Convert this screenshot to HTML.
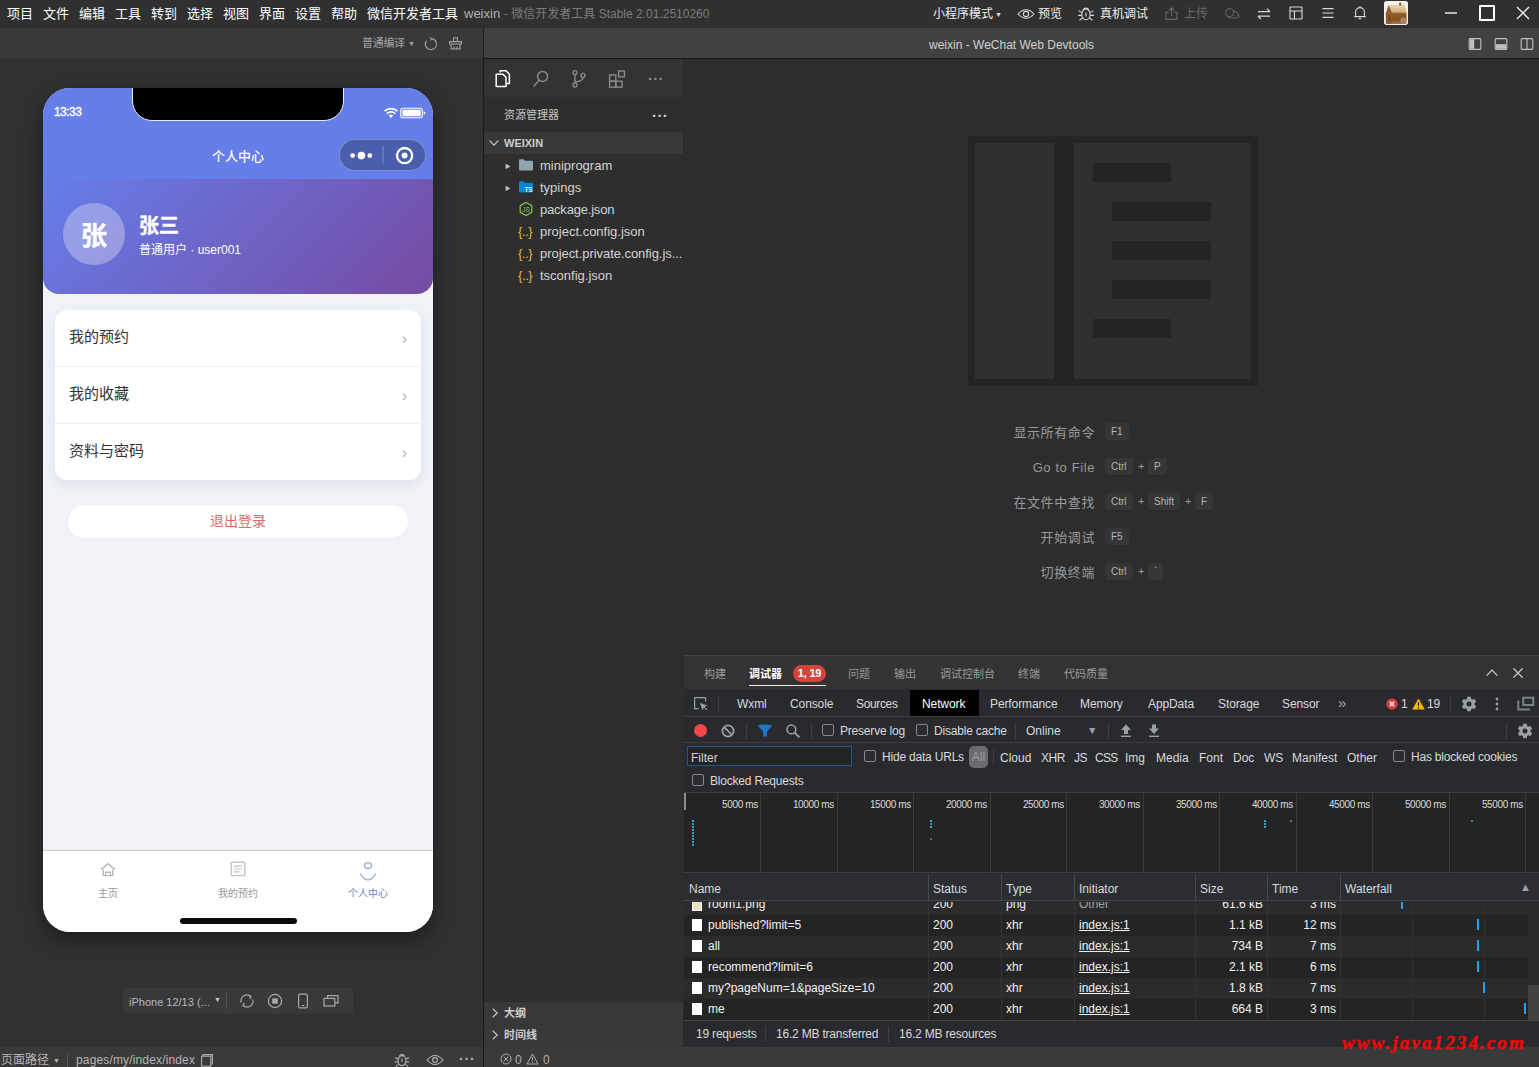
<!DOCTYPE html>
<html lang="zh-CN">
<head>
<meta charset="utf-8">
<title>weixin - 微信开发者工具</title>
<style>
*{box-sizing:border-box;margin:0;padding:0}
html,body{width:1539px;height:1067px;overflow:hidden;background:#2d2d2d}
body{font-family:"Liberation Sans","Noto Sans CJK SC",sans-serif;font-size:12px;color:#ccc;position:relative}
.abs{position:absolute}
svg{display:block;overflow:visible}
/* ---------- top menubar ---------- */
#menubar{position:absolute;left:0;top:0;width:1539px;height:28px;background:#303030}
#menubar .mi{position:absolute;top:0;height:28px;line-height:27px;font-size:13px;color:#fff;white-space:nowrap}
#menubar .dim{color:#7c7c7c}
/* ---------- second row ---------- */
#tool-left{position:absolute;left:0;top:28px;width:483px;height:30px;background:#393939}
#tool-right{position:absolute;left:484px;top:28px;width:1055px;height:31px;background:#414141;border-bottom:1px solid #161616}
#vsplit{position:absolute;left:483px;top:28px;width:1px;height:1039px;background:#1c1c1c}
/* ---------- simulator ---------- */
#sim{position:absolute;left:0;top:58px;width:483px;height:989px;background:#303133}
#phone{position:absolute;left:43px;top:30px;width:390px;height:844px;border-radius:27px;overflow:hidden;background:#f0f2f8;box-shadow:0 8px 22px rgba(0,0,0,.42)}
#statusbar{position:absolute;left:0;top:0;width:390px;height:91px;background:#667eea}
#notch{position:absolute;left:89px;top:-2px;width:212px;height:35px;background:#000;border:1px solid #e8ebff;border-radius:0 0 20px 20px}
#hdr{position:absolute;left:0;top:91px;width:390px;height:115px;background:linear-gradient(135deg,#667eea 0%,#764ba2 100%);border-radius:0 0 16px 16px}
#avatar{position:absolute;left:20px;top:24px;width:62px;height:62px;border-radius:50%;background:rgba(255,255,255,.3);color:#fff;font-weight:bold;font-size:26px;line-height:66px;text-align:center;-webkit-text-stroke:.5px #fff}
.card{position:absolute;left:12px;top:222px;width:366px;height:170px;background:#fff;border-radius:12px;box-shadow:0 4px 12px rgba(100,110,160,.12)}
.card .row{position:absolute;left:0;width:366px;height:57px;border-bottom:1px solid #f0f0f3;font-size:15px;color:#333;line-height:53px;padding-left:14px}
.card .row:last-child{border-bottom:none}
.card .row i{position:absolute;right:14px;top:2px;font-style:normal;color:#b4b4b4;font-size:16px}
#logout{position:absolute;left:25px;top:417px;width:340px;height:33px;border-radius:16px;background:#fff;color:#e26868;font-size:14px;line-height:33px;text-align:center;box-shadow:0 0 2px rgba(0,0,0,.06)}
#tabbar{position:absolute;left:0;top:762px;width:390px;height:82px;background:#fff;border-top:1px solid #c9c9cc}
#tabbar .t{position:absolute;top:36px;width:130px;text-align:center;font-size:10px;color:#999;line-height:14px}
#homeind{position:absolute;left:137px;top:830px;width:117px;height:6px;border-radius:3px;background:#0a0a0a}
/* ---------- bottom status ---------- */
#stat-left{position:absolute;left:0;top:1047px;width:483px;height:20px;background:#3a3a3a}
#stat-right{position:absolute;left:484px;top:1047px;width:1055px;height:20px;background:#3a3a3a}
/* ---------- right side ---------- */
#actbar{position:absolute;left:484px;top:59px;width:199px;height:38px;background:#333333}
#side{position:absolute;left:484px;top:97px;width:199px;height:950px;background:#2e2e2e}
#side .hd{position:absolute;left:0;top:0;width:199px;height:35px;background:#2d2d2d}
#side .sec{position:absolute;left:0;width:199px;height:22px;background:#383838;font-size:11px;font-weight:bold;color:#ccc;line-height:22px}
#side .f{position:absolute;left:56px;font-size:13px;color:#d4d4d4;line-height:24px;white-space:nowrap;letter-spacing:0}
#sidesplit{position:absolute;left:683px;top:59px;width:1px;height:988px;background:#2a2a2a}
#editor{position:absolute;left:684px;top:59px;width:855px;height:596px;background:#2d2d2d}
.kb{position:absolute;height:17px;line-height:18px;padding:0 6px;font-size:10px;color:#b4b4b4;background:#363636;border-radius:3px;box-shadow:0 1px 0 #292929}
.kl{position:absolute;right:444px;font-size:13px;color:#9a9a9a;line-height:21px;white-space:nowrap;letter-spacing:.6px}
.kp{position:absolute;font-size:11px;color:#9a9a9a;line-height:17px}
/* ---------- debugger ---------- */
#dbg{position:absolute;left:684px;top:655px;width:855px;height:392px;background:#292a2d;border-top:1px solid #434343}
#dbg .ph{position:absolute;left:0;top:0;width:855px;height:33px;background:#333333}
#dbg .pt{position:absolute;top:0;line-height:37px;font-size:11px;color:#9a9a9a;white-space:nowrap}
#dbg .dt{position:absolute;top:34px;line-height:28px;font-size:12px;color:#d8dadf;white-space:nowrap;letter-spacing:-.1px}
#dbg .tb{position:absolute;left:0;top:60px;width:855px;height:27px;border-top:1px solid #3d3e42;border-bottom:1px solid #3d3e42}
#dbg .lbl{position:absolute;font-size:12px;color:#d8dadf;white-space:nowrap;line-height:16px}
#dbg .cb{position:absolute;width:12px;height:12px;border:1px solid #85878c;border-radius:2px;background:#2b2c30}
#dbg .vs{position:absolute;width:1px;height:16px;background:#3e3f43}
#ov{position:absolute;left:0;top:136px;width:855px;height:81px;background:#242424;border-top:1px solid #3d3e42;border-bottom:1px solid #3d3e42}
#ov .g{position:absolute;top:0;width:1px;height:80px;background:#3a3a3a}
#ov .tl{position:absolute;top:6px;width:60px;text-align:right;font-size:10px;color:#dcdcdc;line-height:12px;letter-spacing:-.35px;white-space:nowrap}
#ov .d{position:absolute;width:2px;background:#2aa7c9}
#th{position:absolute;left:0;top:218px;width:855px;height:27px;background:#2c2d30;border-bottom:1px solid #46474b}
#th span{position:absolute;top:0;line-height:30px;font-size:12px;color:#d8dadf}
#th i{position:absolute;top:0;width:1px;height:27px;background:#46474b}
#rows{position:absolute;left:0;top:246px;width:855px;height:118px;overflow:hidden;background:#242424}
#rows .r{position:absolute;left:0;width:855px;height:21px;font-size:12px;color:#f2f2f2;line-height:21px}
#rows .r.o{background:#2b2b2b}
#rows .r span{position:absolute;top:0;white-space:nowrap}
#rows .r .ic{left:8px;top:4px;width:10px;height:12px;background:#fff}
#rows .r .u{text-decoration:underline}
#rows .cl{position:absolute;top:0;width:1px;height:118px;background:#333438}
#rows .wb{position:absolute;width:2px;height:11px;background:#2e9ee4;z-index:2}
#sum{position:absolute;left:0;top:364px;width:855px;height:27px;background:#292a2d;border-top:1px solid #46474b}
#sum span{position:absolute;top:0;line-height:26px;font-size:12px;color:#d8dadf;white-space:nowrap;letter-spacing:-.2px}
</style>
</head>
<body>
<!-- MENUBAR -->
<div id="menubar">
<span class="mi" style="left:7px">项目</span>
<span class="mi" style="left:43px">文件</span>
<span class="mi" style="left:79px">编辑</span>
<span class="mi" style="left:115px">工具</span>
<span class="mi" style="left:151px">转到</span>
<span class="mi" style="left:187px">选择</span>
<span class="mi" style="left:223px">视图</span>
<span class="mi" style="left:259px">界面</span>
<span class="mi" style="left:295px">设置</span>
<span class="mi" style="left:331px">帮助</span>
<span class="mi" style="left:367px">微信开发者工具</span>
<span class="mi" style="left:464px;color:#b4b4b4;line-height:28px">weixin</span>
<span class="mi dim" style="left:504px;font-size:12px;line-height:28px">- 微信开发者工具 Stable 2.01.2510260</span>
<span class="mi" style="left:933px;font-size:12px;line-height:29px;color:#f0f0f0">小程序模式</span>
<span class="mi" style="left:995px;font-size:7px;color:#e0e0e0;line-height:30px">▼</span>
<svg class="abs" style="left:1017px;top:7px" width="18" height="14" viewBox="0 0 18 14" fill="none" stroke="#d8d8d8" stroke-width="1.1"><path d="M1 7 Q9 -1.6 17 7 Q9 15.6 1 7 Z"/><circle cx="9" cy="7" r="2.6"/></svg>
<span class="mi" style="left:1038px;font-size:12px;line-height:29px;color:#f0f0f0">预览</span>
<svg class="abs" style="left:1077px;top:4px" width="18" height="18" viewBox="0 0 18 18" fill="none" stroke="#d8d8d8" stroke-width="1.1"><ellipse cx="9" cy="10.4" rx="4.2" ry="5.4"/><path d="M6.2 6 A3 3 0 0 1 11.8 6 M9 8.4 V12.4 M4.8 8.6 L1.6 6.6 M13.2 8.6 L16.4 6.6 M4.8 11.4 H1 M13.2 11.4 H17 M5.4 14 L2.4 16.4 M12.6 14 L15.6 16.4"/></svg>
<span class="mi" style="left:1100px;font-size:12px;line-height:29px;color:#f0f0f0">真机调试</span>
<svg class="abs" style="left:1164px;top:6px" width="15" height="15" viewBox="0 0 15 15" fill="none" stroke="#666" stroke-width="1.1"><path d="M4.6 6.4 H2 V13.4 H13 V6.4 H10.4 M7.5 10.4 V2 M5 4.4 L7.5 1.8 L10 4.4"/></svg>
<span class="mi" style="left:1184px;font-size:12px;line-height:29px;color:#6a6a6a">上传</span>
<svg class="abs" style="left:1224px;top:7px" width="16" height="14" viewBox="0 0 16 14" fill="none" stroke="#606060" stroke-width="1.1"><circle cx="5.6" cy="5.6" r="4"/><path d="M9 4.6 Q13 3.6 13.6 7 Q15.6 8 14.6 10 Q14 11 12.4 11 H6 Q3 11 3.4 8.6"/></svg>
<svg class="abs" style="left:1257px;top:7px" width="14" height="14" viewBox="0 0 14 14" fill="none" stroke="#d8d8d8" stroke-width="1.2"><path d="M1 4.6 H13 M10 1.8 L13 4.6 M13 9.2 H1 M4 12 L1 9.2"/></svg>
<svg class="abs" style="left:1289px;top:6px" width="14" height="14" viewBox="0 0 14 14" fill="none" stroke="#d8d8d8" stroke-width="1.1"><rect x="1" y="1" width="12" height="12" rx=".6"/><path d="M1 5 H13 M5.4 5 V13"/></svg>
<svg class="abs" style="left:1322px;top:7px" width="12" height="12" viewBox="0 0 12 12" fill="none" stroke="#d8d8d8" stroke-width="1.1"><path d="M0.5 1.6 H11.5 M0.5 6 H11.5 M0.5 10.4 H11.5"/></svg>
<svg class="abs" style="left:1353px;top:5px" width="14" height="16" viewBox="0 0 14 16" fill="none" stroke="#d8d8d8" stroke-width="1.1"><path d="M2.6 11.4 V7 A4.4 4.4 0 0 1 11.4 7 V11.4 M1.2 11.6 H12.8 M7 2.4 V1 M5.8 13.6 H8.2"/></svg>
<svg class="abs" style="left:1384px;top:1px;border-radius:3px;overflow:hidden" width="24" height="24" viewBox="0 0 24 24">
 <defs><filter id="avb" x="-10%" y="-10%" width="120%" height="120%"><feGaussianBlur stdDeviation=".7"/></filter>
 <linearGradient id="avr" x1="0" y1="0" x2="0" y2="1"><stop offset="0" stop-color="#ecd6b6"/><stop offset="1" stop-color="#d2a873"/></linearGradient>
 <linearGradient id="avh" x1="0" y1="0" x2="0" y2="1"><stop offset="0" stop-color="#94622f"/><stop offset=".6" stop-color="#84501f"/><stop offset="1" stop-color="#a97a52"/></linearGradient></defs>
 <rect width="24" height="24" fill="#f7f0e8"/>
 <g filter="url(#avb)">
  <path d="M4.600 4.200 L20.500 3.600 L22.600 11.400 L7.400 12 Z" fill="url(#avr)"/>
  <path d="M1.800 12.200 L4.600 4 L8 12 L8 23 L1.800 23 Z" fill="#8f5d2c"/>
  <rect x="7.600" y="11.600" width="15" height="11.400" fill="url(#avh)"/>
  <rect x="15.200" y="1.600" width="2" height="3" fill="#7a5a3a"/>
  <circle cx="19.200" cy="19.600" r="3" fill="#a98366"/>
  <rect x="4.400" y="14.600" width="1.800" height="5" fill="#6e3f12"/>
 </g>
 <rect x=".5" y=".5" width="23" height="23" rx="2.500" fill="none" stroke="#f7f0e8" stroke-width="1.200"/>
</svg>
<div class="abs" style="left:1445px;top:12px;width:12px;height:2px;background:#b8b8b8"></div>
<div class="abs" style="left:1479px;top:5px;width:16px;height:16px;border:2px solid #fff;border-radius:1px"></div>
<svg class="abs" style="left:1516px;top:6px" width="14" height="14" viewBox="0 0 14 14" fill="none" stroke="#f0f0f0" stroke-width="1.3"><path d="M1 1 L13 13 M13 1 L1 13"/></svg>
</div>
<div id="tool-left">
 <span class="abs" style="left:362px;top:0;line-height:31px;font-size:11px;color:#a6a6a6;white-space:nowrap;letter-spacing:-.3px">普通编译</span>
 <span class="abs" style="left:408px;top:0;line-height:32px;font-size:7px;color:#a6a6a6">▼</span>
 <svg class="abs" style="left:424px;top:9px" width="14" height="14" viewBox="0 0 14 14" fill="none" stroke="#a6a6a6" stroke-width="1.1">
  <path d="M7.6 1.6 A5.6 5.6 0 1 1 2.6 3.6"/><path d="M5.6 .4 L7.8 1.6 L6.2 3.6" stroke-width="1"/></svg>
 <svg class="abs" style="left:448px;top:8px" width="15" height="15" viewBox="0 0 15 15" fill="none" stroke="#a6a6a6" stroke-width="1.1">
  <path d="M5.6 5.4 V1.8 H9.4 V5.4"/><path d="M1.6 5.6 H13.4 V8 H1.6 Z"/><path d="M3 8 V13 H12 V8 M6 13 V10.6 M9 13 V10.6"/></svg>
</div>
<div id="tool-right"></div>

<!-- SIMULATOR -->
<div id="sim">
 <div id="phone">
  <div id="statusbar">
   <div id="notch"></div>
   <div class="abs" style="left:11px;top:17px;font-size:12px;color:#fff;letter-spacing:-.55px;-webkit-text-stroke:.35px #fff;line-height:14px">13:33</div>
   <div class="abs" style="left:0;top:59px;width:390px;text-align:center;font-size:13px;font-weight:500;color:#fff;line-height:20px">个人中心</div>
   <svg class="abs" style="left:341px;top:19px" width="44" height="12" viewBox="0 0 44 12">
    <path d="M0.6 4.2 A9 9 0 0 1 13.4 4.2" fill="none" stroke="#fff" stroke-width="1.7"/>
    <path d="M2.9 6.6 A5.8 5.8 0 0 1 11.1 6.6" fill="none" stroke="#fff" stroke-width="1.7"/>
    <path d="M4.8 8.6 A3.2 3.2 0 0 1 9.2 8.6 L7 11 Z" fill="#fff"/>
    <rect x="16.7" y="1.2" width="21.6" height="9.6" rx="2.2" fill="none" stroke="#fff" stroke-width="1.1"/>
    <rect x="18.3" y="2.8" width="18.4" height="6.4" rx="1" fill="#fff"/>
    <path d="M39.6 4.2 q1.7 .4 1.7 1.8 q0 1.4 -1.7 1.8 z" fill="#fff"/>
   </svg>
   <div class="abs" style="left:296px;top:51px;width:87px;height:32px;border-radius:16px;background:rgba(0,0,0,.26);border:1px solid rgba(255,255,255,.28)"></div>
   <svg class="abs" style="left:297px;top:51px" width="87" height="32" viewBox="0 0 87 32">
    <circle cx="12.6" cy="16.6" r="2.4" fill="#fff"/><circle cx="21.4" cy="16.6" r="3.8" fill="#fff"/><circle cx="29.8" cy="16.6" r="2.4" fill="#fff"/>
    <rect x="42.5" y="7" width="1" height="18" fill="rgba(255,255,255,.3)"/>
    <circle cx="64.6" cy="16.6" r="7.6" fill="none" stroke="#fff" stroke-width="2.3"/><circle cx="64.6" cy="16.6" r="3" fill="#fff"/>
   </svg>
  </div>
  <div id="hdr">
   <div id="avatar">张</div>
   <div class="abs" style="left:96px;top:34px;font-size:20px;font-weight:bold;-webkit-text-stroke:.4px #fff;color:#fff;line-height:26px">张三</div>
   <div class="abs" style="left:96px;top:63px;font-size:12px;color:#fff;line-height:16px">普通用户 · user001</div>
  </div>
  <div class="card">
   <div class="row" style="top:0">我的预约<i>›</i></div>
   <div class="row" style="top:57px">我的收藏<i>›</i></div>
   <div class="row" style="top:114px">资料与密码<i>›</i></div>
  </div>
  <div id="logout">退出登录</div>
  <div id="tabbar">
   <svg class="abs" style="left:56px;top:10px" width="18" height="18" viewBox="0 0 18 18" fill="none" stroke="#b9b9b9" stroke-width="1.4">
    <path d="M2 8.6 L9 2.6 L16 8.6"/><path d="M4.3 8.8 V14.6 H13.7 V8.8"/><path d="M6.6 14.6 V11.2 H11.4 V14.6"/></svg>
   <svg class="abs" style="left:186px;top:9px" width="18" height="18" viewBox="0 0 18 18" fill="none" stroke="#c4c4c4" stroke-width="1.4">
    <rect x="2.2" y="2.2" width="13.6" height="13.4" rx="1.2"/><path d="M5 6.2 H13 M5 9 H13 M5 11.8 H10.5" stroke-width="1.2"/></svg>
   <svg class="abs" style="left:316px;top:9px" width="18" height="22" viewBox="0 0 18 22" fill="none" stroke="#a2aee6" stroke-width="1.4">
    <ellipse cx="9" cy="5.600" rx="3.500" ry="2.900"/><path d="M1.200 13.600 Q9 26.200 16.800 13.600"/></svg>
   <div class="t" style="left:0">主页</div>
   <div class="t" style="left:130px">我的预约</div>
   <div class="t" style="left:260px;color:#6e7fc6">个人中心</div>
  </div>
  <div id="homeind"></div>
 </div>
</div>
<div class="abs" style="left:123px;top:988px;width:230px;height:26px;background:#38393b;border-radius:3px">
 <span class="abs" style="left:6px;top:0;line-height:28px;font-size:11px;color:#b8b8b8;white-space:nowrap">iPhone 12/13 (...</span>
 <span class="abs" style="left:91px;top:0;line-height:24px;font-size:7px;color:#c8c8c8">▼</span>
 <span class="abs" style="left:103px;top:5px;width:1px;height:16px;background:#555"></span>
 <svg class="abs" style="left:116px;top:5px" width="16" height="16" viewBox="0 0 16 16" fill="none" stroke="#a8a8a8" stroke-width="1.2">
  <path d="M2.2 9.6 A6 6 0 0 1 11.6 3.2 M13.8 6.4 A6 6 0 0 1 4.4 12.8"/><path d="M9.4 2.2 L12 3.4 L10.8 6 M6.6 13.8 L4 12.6 L5.2 10"/></svg>
 <svg class="abs" style="left:144px;top:5px" width="16" height="16" viewBox="0 0 16 16" fill="none" stroke="#a8a8a8" stroke-width="1.2">
  <circle cx="8" cy="8" r="6.6"/><rect x="5.2" y="5.2" width="5.6" height="5.6" rx=".8" fill="#a8a8a8" stroke="none"/></svg>
 <svg class="abs" style="left:172px;top:5px" width="16" height="16" viewBox="0 0 16 16" fill="none" stroke="#a8a8a8" stroke-width="1.2">
  <rect x="3.6" y="1.2" width="8.8" height="13.6" rx="1.2"/><path d="M6.6 12.6 H9.4"/></svg>
 <svg class="abs" style="left:199px;top:5px" width="18" height="16" viewBox="0 0 18 16" fill="none" stroke="#a8a8a8" stroke-width="1.2">
  <path d="M5.6 5.2 V2.6 H16 V9.8 H13"/><rect x="2" y="5.4" width="10.8" height="7.6"/></svg>
</div>
<!-- RIGHT TITLE BAR -->
<div class="abs" style="left:484px;top:28px;width:1055px;height:30px">
 <span class="abs" style="left:0;top:0;width:1055px;text-align:center;line-height:34px;font-size:12px;color:#d0d0d0;letter-spacing:0">weixin - WeChat Web Devtools</span>
 <svg class="abs" style="left:984px;top:9px" width="14" height="14" viewBox="0 0 14 14" fill="none" stroke="#c0c0c0" stroke-width="1.1"><rect x="1.2" y="1.6" width="11.6" height="10.8" rx="1"/><rect x="1.8" y="2.2" width="4.4" height="9.6" fill="#c0c0c0" stroke="none"/></svg>
 <svg class="abs" style="left:1010px;top:9px" width="14" height="14" viewBox="0 0 14 14" fill="none" stroke="#c0c0c0" stroke-width="1.1"><rect x="1.2" y="1.6" width="11.6" height="10.8" rx="1"/><rect x="1.8" y="7.2" width="10.4" height="4.6" fill="#c0c0c0" stroke="none"/></svg>
 <svg class="abs" style="left:1036px;top:9px" width="14" height="14" viewBox="0 0 14 14" fill="none" stroke="#c0c0c0" stroke-width="1.1"><rect x="1.2" y="1.6" width="11.6" height="10.8" rx="1"/><path d="M7 1.6 V12.4"/></svg>
</div>
<!-- ACTIVITY BAR -->
<div id="actbar">
 <svg class="abs" style="left:10px;top:10px" width="18" height="20" viewBox="0 0 18 20" fill="none" stroke="#ffffff" stroke-width="1.5" stroke-linejoin="round">
  <path d="M6.2 3.6 V1.8 H12 L15.4 5.2 V14.4 H12.4"/><path d="M2.2 5.2 H9 L12 8.2 V17.6 H2.2 Z" fill="#333"/></svg>
 <svg class="abs" style="left:48px;top:10px" width="18" height="20" viewBox="0 0 18 20" fill="none" stroke="#8a8a8a" stroke-width="1.5">
  <circle cx="10.6" cy="7.4" r="5"/><path d="M7 11.2 L1.6 17.4"/></svg>
 <svg class="abs" style="left:86px;top:10px" width="18" height="20" viewBox="0 0 18 20" fill="none" stroke="#8a8a8a" stroke-width="1.4">
  <circle cx="5" cy="3.6" r="2"/><circle cx="5" cy="16" r="2"/><circle cx="13" cy="6.4" r="2"/><path d="M5 5.6 V14 M13 8.4 Q13 12 5 13"/></svg>
 <svg class="abs" style="left:124px;top:10px" width="18" height="20" viewBox="0 0 18 20" fill="none" stroke="#8a8a8a" stroke-width="1.4">
  <rect x="1.6" y="6" width="6.2" height="6.2"/><rect x="1.6" y="12.2" width="6.2" height="6"/><rect x="7.8" y="12.2" width="6.2" height="6"/><rect x="10.6" y="2" width="5.8" height="5.8"/></svg>
 <span class="abs" style="left:164px;top:8px;font-size:15px;color:#8a8a8a;letter-spacing:.3px;line-height:24px;font-weight:bold">···</span>
</div>
<!-- SIDEBAR -->
<div id="side">
 <div class="hd">
  <span class="abs" style="left:20px;top:0;line-height:36px;font-size:11px;color:#c6c6c6">资源管理器</span>
  <span class="abs" style="left:168px;top:7px;font-size:15px;color:#d0d0d0;letter-spacing:.4px;line-height:24px;font-weight:bold">···</span>
 </div>
 <div class="sec" style="top:35px">
  <svg class="abs" style="left:4px;top:5px" width="12" height="12" viewBox="0 0 12 12" fill="none" stroke="#ccc" stroke-width="1.2"><path d="M1.6 3.6 L6 8.2 L10.4 3.6"/></svg>
  <span class="abs" style="left:20px;top:0">WEIXIN</span>
 </div>
 <!-- tree -->
 <span class="abs" style="left:21px;top:64px;font-size:5.500px;color:#c5c5c5;line-height:10px">▶</span>
 <svg class="abs" style="left:34px;top:61px" width="16" height="14" viewBox="0 0 16 14"><path d="M1 2.2 Q1 1.2 2 1.2 H5.6 L7 2.8 H14 Q15 2.8 15 3.8 V11.6 Q15 12.6 14 12.6 H2 Q1 12.6 1 11.6 Z" fill="#90a4ae"/></svg>
 <span class="f" style="top:57px">miniprogram</span>
 <span class="abs" style="left:21px;top:86px;font-size:5.500px;color:#c5c5c5;line-height:10px">▶</span>
 <svg class="abs" style="left:34px;top:83px" width="16" height="14" viewBox="0 0 16 14"><path d="M1 2.2 Q1 1.2 2 1.2 H5.6 L7 2.8 H14 Q15 2.8 15 3.8 V11.6 Q15 12.6 14 12.6 H2 Q1 12.6 1 11.6 Z" fill="#0288d1"/><text x="6.4" y="12" font-size="6.5" font-weight="bold" fill="#d6efff" font-family="Liberation Sans, sans-serif">TS</text></svg>
 <span class="f" style="top:79px">typings</span>
 <svg class="abs" style="left:34px;top:104px" width="16" height="16" viewBox="0 0 16 16"><path d="M8 1.400 L13.800 4.700 V11.300 L8 14.600 L2.200 11.300 V4.700 Z" fill="none" stroke="#8bc34a" stroke-width="1.200"/><text x="8" y="10.600" text-anchor="middle" font-size="6.500" fill="#8bc34a" font-family="Liberation Sans, sans-serif">JS</text></svg>
 <span class="f" style="top:101px;letter-spacing:-.2px">package.json</span>
 <span class="abs" style="left:34px;top:123px;font-size:13px;color:#e8b53c;line-height:23px;letter-spacing:-.4px">{..}</span>
 <span class="f" style="top:123px">project.config.json</span>
 <span class="abs" style="left:34px;top:145px;font-size:13px;color:#e8b53c;line-height:23px;letter-spacing:-.4px">{..}</span>
 <span class="f" style="top:145px;letter-spacing:-.05px">project.private.config.js...</span>
 <span class="abs" style="left:34px;top:167px;font-size:13px;color:#e8b53c;line-height:23px;letter-spacing:-.4px">{..}</span>
 <span class="f" style="top:167px">tsconfig.json</span>
 <!-- outline / timeline -->
 <div class="abs" style="left:0;top:904px;width:199px;height:46px;background:#383838;border-top:1px solid #2a2a2a">
  <svg class="abs" style="left:5px;top:5px" width="12" height="12" viewBox="0 0 12 12" fill="none" stroke="#ccc" stroke-width="1.2"><path d="M3.6 1.6 L8.2 6 L3.6 10.4"/></svg>
  <span class="abs" style="left:20px;top:0;line-height:22px;font-size:11px;font-weight:bold;color:#ccc">大纲</span>
  <div class="abs" style="left:0;top:22px;width:199px;height:1px;background:#353535"></div>
  <svg class="abs" style="left:5px;top:27px" width="12" height="12" viewBox="0 0 12 12" fill="none" stroke="#ccc" stroke-width="1.2"><path d="M3.6 1.6 L8.2 6 L3.6 10.4"/></svg>
  <span class="abs" style="left:20px;top:22px;line-height:22px;font-size:11px;font-weight:bold;color:#ccc">时间线</span>
 </div>
</div>
<div id="sidesplit"></div>
<!-- EDITOR WATERMARK -->
<div id="editor">
 <svg class="abs" style="left:284px;top:77px" width="290" height="250" viewBox="0 0 290 250">
  <rect x="0" y="0" width="290" height="250" fill="#242424"/>
  <rect x="7" y="7" width="79" height="236" fill="#303030"/>
  <rect x="106" y="7" width="177" height="236" fill="#303030"/>
  <rect x="125" y="27" width="78" height="19" fill="#242424"/>
  <rect x="144" y="66" width="99" height="19" fill="#242424"/>
  <rect x="144" y="105" width="99" height="19" fill="#242424"/>
  <rect x="144" y="144" width="99" height="19" fill="#242424"/>
  <rect x="125" y="183" width="78" height="19" fill="#242424"/>
 </svg>
 <span class="kl" style="top:363px">显示所有命令</span><span class="kb" style="left:421px;top:364px">F1</span>
 <span class="kl" style="top:398px">Go to File</span><span class="kb" style="left:421px;top:399px">Ctrl</span><span class="kp" style="left:454px;top:399px">+</span><span class="kb" style="left:464px;top:399px">P</span>
 <span class="kl" style="top:433px">在文件中查找</span><span class="kb" style="left:421px;top:434px">Ctrl</span><span class="kp" style="left:454px;top:434px">+</span><span class="kb" style="left:464px;top:434px">Shift</span><span class="kp" style="left:501px;top:434px">+</span><span class="kb" style="left:511px;top:434px">F</span>
 <span class="kl" style="top:468px">开始调试</span><span class="kb" style="left:421px;top:469px">F5</span>
 <span class="kl" style="top:503px">切换终端</span><span class="kb" style="left:421px;top:504px">Ctrl</span><span class="kp" style="left:454px;top:504px">+</span><span class="kb" style="left:464px;top:504px">`</span>
</div>
<!-- DEBUGGER PANEL -->
<div id="dbg">
 <div class="ph">
  <span class="pt" style="left:20px">构建</span>
  <span class="pt" style="left:65px;color:#fff;font-weight:bold">调试器</span>
  <span class="abs" style="left:109px;top:9px;width:33px;height:17px;border-radius:9px;background:#d5443c;color:#fff;font-size:11px;font-weight:bold;line-height:17px;text-align:center;letter-spacing:-.2px">1, 19</span>
  <span class="abs" style="left:65px;top:29px;width:77px;height:1px;background:#e8e8e8"></span>
  <span class="pt" style="left:164px">问题</span>
  <span class="pt" style="left:210px">输出</span>
  <span class="pt" style="left:256px">调试控制台</span>
  <span class="pt" style="left:334px">终端</span>
  <span class="pt" style="left:380px">代码质量</span>
  <svg class="abs" style="left:801px;top:11px" width="14" height="12" viewBox="0 0 14 12" fill="none" stroke="#cfcfcf" stroke-width="1.2"><path d="M1.6 8.6 L7 3 L12.4 8.6"/></svg>
  <svg class="abs" style="left:828px;top:11px" width="12" height="12" viewBox="0 0 12 12" fill="none" stroke="#d8d8d8" stroke-width="1.3"><path d="M1.4 1.4 L10.6 10.6 M10.6 1.4 L1.4 10.6"/></svg>
 </div>
 <!-- devtools tabs -->
 <svg class="abs" style="left:9px;top:40px" width="16" height="16" viewBox="0 0 16 16" fill="none" stroke="#9aa0a6" stroke-width="1.2"><path d="M12.6 5.6 V1.6 H1.6 V12.6 H5.6"/><path d="M7 7 L9.4 14.4 L10.8 11.4 L14 14.4 L14.6 13.8 L11.4 10.8 L14.4 9.4 Z" fill="#9aa0a6" stroke="none"/></svg>
 <span class="vs" style="left:34px;top:40px"></span>
 <span class="abs" style="left:226px;top:34px;width:69px;height:26px;background:#000"></span>
 <span class="dt" style="left:53px">Wxml</span>
 <span class="dt" style="left:106px">Console</span>
 <span class="dt" style="left:172px;letter-spacing:-.35px">Sources</span>
 <span class="dt" style="left:238px;color:#fff">Network</span>
 <span class="dt" style="left:306px">Performance</span>
 <span class="dt" style="left:396px">Memory</span>
 <span class="dt" style="left:464px">AppData</span>
 <span class="dt" style="left:534px">Storage</span>
 <span class="dt" style="left:598px">Sensor</span>
 <span class="dt" style="left:654px;font-size:15px;line-height:26px;color:#a0a4a8">»</span>
 <svg class="abs" style="left:702px;top:42px" width="12" height="12" viewBox="0 0 12 12"><circle cx="6" cy="6" r="5.6" fill="#e0383e"/><path d="M3.8 3.8 L8.2 8.2 M8.2 3.8 L3.8 8.2" stroke="#fff" stroke-width="1.5"/></svg>
 <span class="dt" style="left:717px">1</span>
 <svg class="abs" style="left:728px;top:42px" width="13" height="12" viewBox="0 0 13 12"><path d="M6.5 .4 L12.8 11.6 H.2 Z" fill="#f4bd00"/><path d="M6.5 4 V8 M6.5 9 V10.4" stroke="#222" stroke-width="1.3"/></svg>
 <span class="dt" style="left:743px">19</span>
 <span class="vs" style="left:766px;top:40px"></span>
 <svg class="abs" style="left:777px;top:40px" width="16" height="16" viewBox="0 0 16 16"><path fill="#9aa0a6" d="M13.9 8.7c0-.2.1-.5.1-.7s0-.5-.1-.7l1.5-1.200c.1-.1.200-.3.100-.5l-1.400-2.400c-.1-.2-.3-.2-.5-.2l-1.800.7c-.4-.3-.8-.5-1.200-.7l-.3-1.900c0-.2-.2-.3-.4-.3H7.100c-.2 0-.4.100-.4.300l-.3 1.900c-.4.200-.8.400-1.200.7l-1.800-.7c-.2-.1-.4 0-.5.200L1.500 5.600c-.1.200-.1.400.1.500l1.500 1.200c0 .2-.1.500-.1.700s0 .5.100.7l-1.500 1.200c-.1.100-.2.300-.1.500l1.400 2.400c.1.200.3.200.5.200l1.800-.7c.4.300.8.500 1.200.7l.3 1.900c0 .2.200.3.400.3h2.800c.2 0 .4-.1.400-.3l.3-1.900c.4-.2.8-.4 1.200-.7l1.800.7c.2.100.4 0 .5-.2l1.400-2.400c.1-.2.100-.4-.1-.5l-1.500-1.200zM8.500 10.500a2.500 2.500 0 1 1 0-5 2.500 2.500 0 0 1 0 5z" transform="translate(-.5 0)"/></svg>
 <svg class="abs" style="left:811px;top:40px" width="4" height="16" viewBox="0 0 4 16" fill="#9aa0a6"><circle cx="2" cy="3" r="1.4"/><circle cx="2" cy="8" r="1.4"/><circle cx="2" cy="13" r="1.4"/></svg>
 <svg class="abs" style="left:833px;top:41px" width="18" height="15" viewBox="0 0 18 15" fill="none" stroke="#7e8287" stroke-width="2"><rect x="6.200" y=".700" width="10.100" height="7.300"/><path d="M1.300 3.500 V12.400 H12.900"/></svg>
 <!-- network toolbar -->
 <div class="tb">
  <span class="abs" style="left:10px;top:7px;width:13px;height:13px;border-radius:50%;background:#f2474b"></span>
  <svg class="abs" style="left:37px;top:7px" width="14" height="14" viewBox="0 0 14 14" fill="none" stroke="#9aa0a6" stroke-width="1.800"><circle cx="7" cy="7" r="5.6"/><path d="M3.2 3.2 L10.8 10.8"/></svg>
  <span class="vs" style="left:62px;top:6px"></span>
  <svg class="abs" style="left:72px;top:7px" width="18" height="14" viewBox="0 0 18 14"><path d="M1.6 1.4 Q9 -.6 16.4 1.4 L11 7.6 V12.6 H7 V7.6 Z" fill="#1b78c8"/></svg>
  <svg class="abs" style="left:101px;top:6px" width="16" height="16" viewBox="0 0 16 16" fill="none" stroke="#9aa0a6" stroke-width="1.600"><circle cx="6.4" cy="6.4" r="4.400"/><path d="M9.6 9.6 L14.4 14.4" stroke-width="2"/></svg>
  <span class="vs" style="left:127px;top:6px"></span>
  <span class="cb" style="left:138px;top:7px"></span>
  <span class="lbl" style="left:156px;top:6px;letter-spacing:-.2px">Preserve log</span>
  <span class="cb" style="left:232px;top:7px"></span>
  <span class="lbl" style="left:250px;top:6px;letter-spacing:-.2px">Disable cache</span>
  <span class="vs" style="left:331px;top:6px"></span>
  <span class="lbl" style="left:342px;top:6px">Online</span>
  <span class="abs" style="left:403px;top:6px;font-size:10.500px;color:#9aa0a6;line-height:15px">▼</span>
  <span class="vs" style="left:424px;top:6px"></span>
  <svg class="abs" style="left:436px;top:7px" width="12" height="14" viewBox="0 0 12 14" fill="#9aa0a6"><path d="M6 .6 L11 6 H8 V10 H4 V6 H1 Z"/><rect x="1" y="11.600" width="10" height="1.400"/></svg>
  <svg class="abs" style="left:464px;top:7px" width="12" height="14" viewBox="0 0 12 14" fill="#9aa0a6"><path d="M6 10 L11 4.600 H8 V.6 H4 V4.600 H1 Z"/><rect x="1" y="11.600" width="10" height="1.400"/></svg>
  <span class="vs" style="left:822px;top:6px"></span>
  <svg class="abs" style="left:833px;top:6px" width="16" height="16" viewBox="0 0 16 16"><path fill="#9aa0a6" d="M13.9 8.7c0-.2.1-.5.1-.7s0-.5-.1-.7l1.500-1.200c.1-.1.200-.3.100-.5l-1.400-2.400c-.1-.2-.3-.2-.5-.2l-1.800.7c-.4-.3-.8-.5-1.200-.7l-.3-1.900c0-.2-.2-.3-.4-.3H7.100c-.2 0-.4.100-.4.300l-.3 1.900c-.4.200-.8.400-1.200.7l-1.800-.7c-.2-.1-.4 0-.5.200L1.500 5.600c-.1.200-.1.400.1.500l1.500 1.200c0 .2-.1.500-.1.700s0 .5.100.7l-1.500 1.200c-.1.100-.2.300-.1.500l1.400 2.400c.1.200.3.200.5.200l1.800-.7c.4.300.8.500 1.200.7l.3 1.900c0 .2.200.3.400.3h2.800c.2 0 .4-.1.400-.3l.3-1.900c.4-.2.8-.4 1.200-.7l1.800.7c.2.100.4 0 .5-.2l1.400-2.400c.1-.2.100-.4-.1-.5l-1.500-1.200zM8.500 10.500a2.500 2.500 0 1 1 0-5 2.500 2.500 0 0 1 0 5z" transform="translate(-.5 0)"/></svg>
 </div>
 <!-- filter row -->
 <div class="abs" style="left:3px;top:90px;width:165px;height:20px;border:1px solid #1b5888;background:#232324"></div>
 <span class="lbl" style="left:7px;top:94px;color:#d4d4d0">Filter</span>
 <span class="cb" style="left:180px;top:94px"></span>
 <span class="lbl" style="left:198px;top:93px;letter-spacing:-.2px">Hide data URLs</span>
 <span class="abs" style="left:285px;top:90px;width:19px;height:22px;border-radius:5px;background:#6b6c6f;color:#9a9c9f;font-size:12px;line-height:22px;text-align:center">All</span>
 <span class="vs" style="left:309px;top:93px"></span>
 <span class="lbl" style="left:316px;top:94px">Cloud</span>
 <span class="lbl" style="left:357px;top:94px;letter-spacing:-.4px">XHR</span>
 <span class="lbl" style="left:390px;top:94px;letter-spacing:-.4px">JS</span>
 <span class="lbl" style="left:411px;top:94px;letter-spacing:-.7px">CSS</span>
 <span class="lbl" style="left:441px;top:94px">Img</span>
 <span class="lbl" style="left:472px;top:94px">Media</span>
 <span class="lbl" style="left:515px;top:94px">Font</span>
 <span class="lbl" style="left:549px;top:94px">Doc</span>
 <span class="lbl" style="left:580px;top:94px">WS</span>
 <span class="lbl" style="left:608px;top:94px">Manifest</span>
 <span class="lbl" style="left:663px;top:94px">Other</span>
 <span class="cb" style="left:709px;top:94px"></span>
 <span class="lbl" style="left:727px;top:93px;letter-spacing:-.2px">Has blocked cookies</span>
 <span class="cb" style="left:8px;top:118px"></span>
 <span class="lbl" style="left:26px;top:117px;letter-spacing:-.2px">Blocked Requests</span>
 <!-- overview -->
 <div id="ov">
  <i class="g" style="left:76px"></i><i class="g" style="left:153px"></i><i class="g" style="left:229px"></i><i class="g" style="left:306px"></i><i class="g" style="left:382px"></i><i class="g" style="left:459px"></i><i class="g" style="left:535px"></i><i class="g" style="left:612px"></i><i class="g" style="left:688px"></i><i class="g" style="left:765px"></i><i class="g" style="left:841px"></i>
  <span class="tl" style="left:14px">5000 ms</span><span class="tl" style="left:90px">10000 ms</span><span class="tl" style="left:167px">15000 ms</span><span class="tl" style="left:243px">20000 ms</span><span class="tl" style="left:320px">25000 ms</span><span class="tl" style="left:396px">30000 ms</span><span class="tl" style="left:473px">35000 ms</span><span class="tl" style="left:549px">40000 ms</span><span class="tl" style="left:626px">45000 ms</span><span class="tl" style="left:702px">50000 ms</span><span class="tl" style="left:779px">55000 ms</span>
  <b class="d" style="left:8px;top:27px;height:2px;width:2px;opacity:1"></b><b class="d" style="left:8px;top:30px;height:2px;width:2px;opacity:1"></b><b class="d" style="left:8px;top:33px;height:2px;width:2px;opacity:1"></b><b class="d" style="left:8px;top:36px;height:2px;width:2px;opacity:1"></b><b class="d" style="left:8px;top:39px;height:2px;width:2px;opacity:1"></b><b class="d" style="left:8px;top:42px;height:2px;width:2px;opacity:1"></b><b class="d" style="left:8px;top:45px;height:2px;width:2px;opacity:1"></b><b class="d" style="left:8px;top:48px;height:2px;width:2px;opacity:1"></b><b class="d" style="left:8px;top:51px;height:2px;width:2px;opacity:1"></b><b class="abs" style="left:0;top:0;width:2px;height:17px;background:#8e8e8e"></b><b class="d" style="left:246px;top:27px;height:2px;width:2px;opacity:1"></b><b class="d" style="left:246px;top:30px;height:2px;width:2px;opacity:1"></b><b class="d" style="left:246px;top:33px;height:2px;width:2px;opacity:1"></b><b class="d" style="left:246px;top:45px;height:2px;width:2px;opacity:0.7"></b><b class="d" style="left:580px;top:27px;height:2px;width:2px;opacity:1"></b><b class="d" style="left:580px;top:30px;height:2px;width:2px;opacity:1"></b><b class="d" style="left:580px;top:33px;height:2px;width:2px;opacity:1"></b><b class="d" style="left:606px;top:27px;height:2px;width:2px;opacity:0.8"></b><b class="d" style="left:787px;top:27px;height:2px;width:2px;opacity:0.8"></b>
 </div>
 <!-- table head -->
 <div id="th">
  <span style="left:5px">Name</span><i style="left:244px"></i><span style="left:249px">Status</span><i style="left:317px"></i><span style="left:322px">Type</span><i style="left:390px"></i><span style="left:395px">Initiator</span><i style="left:511px"></i><span style="left:516px">Size</span><i style="left:583px"></i><span style="left:588px">Time</span><i style="left:656px"></i><span style="left:661px">Waterfall</span>
  <span style="left:836px;font-size:11px;color:#a4a4a4;line-height:27px">▲</span>
 </div>
 <div id="rows">
 <div class="r o" style="top:-8px"><span class="ic" style="background:#e8e0c8;border:1px solid #fff;height:12px;top:5px"></span><span style="left:24px">room1.png</span><span style="left:249px">200</span><span style="left:322px">png</span><span style="left:395px;color:#9aa0a6">Other</span><span style="right:276px">61.6 kB</span><span style="right:203px">3 ms</span><b class="wb" style="left:717px;top:4px"></b></div>
 <div class="r" style="top:13px"><span class="ic"></span><span style="left:24px">published?limit=5</span><span style="left:249px">200</span><span style="left:322px">xhr</span><span class="u" style="left:395px">index.js:1</span><span style="right:276px">1.1 kB</span><span style="right:203px">12 ms</span><b class="wb" style="left:793px;top:4px"></b></div>
 <div class="r o" style="top:34px"><span class="ic"></span><span style="left:24px">all</span><span style="left:249px">200</span><span style="left:322px">xhr</span><span class="u" style="left:395px">index.js:1</span><span style="right:276px">734 B</span><span style="right:203px">7 ms</span><b class="wb" style="left:793px;top:4px"></b></div>
 <div class="r" style="top:55px"><span class="ic"></span><span style="left:24px">recommend?limit=6</span><span style="left:249px">200</span><span style="left:322px">xhr</span><span class="u" style="left:395px">index.js:1</span><span style="right:276px">2.1 kB</span><span style="right:203px">6 ms</span><b class="wb" style="left:793px;top:4px"></b></div>
 <div class="r o" style="top:76px"><span class="ic"></span><span style="left:24px">my?pageNum=1&amp;pageSize=10</span><span style="left:249px">200</span><span style="left:322px">xhr</span><span class="u" style="left:395px">index.js:1</span><span style="right:276px">1.8 kB</span><span style="right:203px">7 ms</span><b class="wb" style="left:799px;top:4px"></b></div>
 <div class="r" style="top:97px"><span class="ic"></span><span style="left:24px">me</span><span style="left:249px">200</span><span style="left:322px">xhr</span><span class="u" style="left:395px">index.js:1</span><span style="right:276px">664 B</span><span style="right:203px">3 ms</span><b class="wb" style="left:840px;top:4px"></b></div>
 <i class="cl" style="left:244px"></i><i class="cl" style="left:317px"></i><i class="cl" style="left:390px"></i><i class="cl" style="left:511px"></i><i class="cl" style="left:583px"></i><i class="cl" style="left:656px"></i><i class="cl" style="left:728px;background:#303134"></i><i class="cl" style="left:800px;background:#303134"></i>
 <div class="abs" style="left:844px;top:0;width:11px;height:118px;background:#2a2a2a;z-index:3"></div><div class="abs" style="left:844px;top:83px;width:11px;height:35px;background:#424242;z-index:3"></div>
 </div>
 <div id="sum">
  <span style="left:12px">19 requests</span><i class="vs" style="left:81px;top:5px"></i>
  <span style="left:92px">16.2 MB transferred</span><i class="vs" style="left:204px;top:5px"></i>
  <span style="left:215px">16.2 MB resources</span>
 </div>
</div>
<div class="abs" style="left:1342px;top:1033px;font-family:'Liberation Serif','DejaVu Serif',serif;font-style:italic;font-weight:bold;font-size:19px;color:#f00808;letter-spacing:2.1px;line-height:20px;white-space:nowrap;z-index:5;-webkit-text-stroke:.4px #f00808">www.java1234.com</div>
<div id="vsplit"></div>
<div id="stat-left">
 <span class="abs" style="left:1px;top:3px;line-height:20px;font-size:12px;color:#b6b6b6;white-space:nowrap">页面路径</span>
 <span class="abs" style="left:53px;top:3px;line-height:21px;font-size:7px;color:#b6b6b6">▼</span>
 <span class="abs" style="left:67px;top:6px;width:1px;height:14px;background:#555"></span>
 <span class="abs" style="left:76px;top:3px;line-height:20px;font-size:12px;color:#b6b6b6;white-space:nowrap;letter-spacing:.15px">pages/my/index/index</span>
 <svg class="abs" style="left:200px;top:6px" width="14" height="14" viewBox="0 0 14 14" fill="none" stroke="#b0b0b0" stroke-width="1.1"><path d="M3 3 V1.6 H12.4 V11 H11"/><rect x="1.6" y="3.2" width="9.2" height="10"/></svg>
 <svg class="abs" style="left:393px;top:4px" width="18" height="16" viewBox="0 0 18 16" fill="none" stroke="#b4b4b4" stroke-width="1.1">
  <ellipse cx="9" cy="9.6" rx="4" ry="5"/><path d="M6.4 5.4 A2.7 2.7 0 0 1 11.6 5.4 M9 7.6 V11 M5 8 L2 6.4 M13 8 L16 6.4 M5 11 H1.6 M13 11 H16.4 M5.6 13.4 L3 15.4 M12.4 13.4 L15 15.4"/></svg>
 <svg class="abs" style="left:426px;top:7px" width="18" height="12" viewBox="0 0 18 12" fill="none" stroke="#b4b4b4" stroke-width="1.1">
  <path d="M1 6 Q9 -3 17 6 Q9 15 1 6 Z"/><circle cx="9" cy="6" r="2.4"/></svg>
 <span class="abs" style="left:459px;top:1px;line-height:22px;font-size:14px;font-weight:bold;color:#b4b4b4;letter-spacing:.8px">···</span>
</div>
<div id="stat-right">
 <svg class="abs" style="left:16px;top:6px" width="12" height="12" viewBox="0 0 12 12" fill="none" stroke="#b0b0b0" stroke-width="1"><circle cx="6" cy="6" r="5"/><path d="M3.8 3.8 L8.2 8.2 M8.2 3.8 L3.8 8.2"/></svg>
 <span class="abs" style="left:31px;top:3px;line-height:20px;font-size:12px;color:#b0b0b0">0</span>
 <svg class="abs" style="left:42px;top:6px" width="13" height="12" viewBox="0 0 13 12" fill="none" stroke="#b0b0b0" stroke-width="1"><path d="M6.5 1 L12 11 H1 Z"/><path d="M6.5 4.4 V7.6 M6.5 8.6 V9.8"/></svg>
 <span class="abs" style="left:59px;top:3px;line-height:20px;font-size:12px;color:#b0b0b0">0</span>
</div>
</body>
</html>
